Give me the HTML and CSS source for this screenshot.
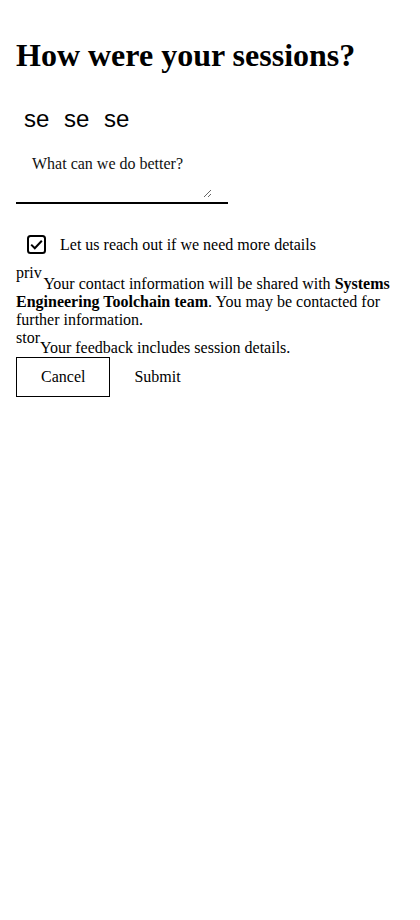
FILE: index.html
```html
<!DOCTYPE html>
<html>
<head>
<meta charset="utf-8">
<link rel="stylesheet" href="styles.css">
</head>
<body>
<div class="page">
  <h1 class="title">How were your sessions?</h1>
  <div class="rating">
    <span class="icon-btn">se</span>
    <span class="icon-btn">se</span>
    <span class="icon-btn">se</span>
  </div>
  <div class="field">
    <textarea class="feedback" placeholder="What can we do better?"></textarea>
  </div>
  <label class="check-row">
    <svg class="check" width="19" height="19" viewBox="0 0 19 19"><rect x="1" y="1" width="17" height="17" rx="2.5" fill="none" stroke="#000" stroke-width="2"/><path d="M4.2 9.6 L7.8 13.2 L14.8 5.8" fill="none" stroke="#000" stroke-width="2"/></svg>
    <span class="check-label">Let us reach out if we need more details</span>
  </label>
  <p class="note note-first"><span class="mi mi-high">priv</span> Your contact information will be shared with <b>Systems Engineering Toolchain team</b>. You may be contacted for further information.</p>
  <p class="note"><span class="mi mi-low">stor</span>Your feedback includes session details.</p>
  <div class="actions">
    <button class="btn btn-outline">Cancel</button>
    <button class="btn btn-text">Submit</button>
  </div>
</div>
</body>
</html>
```
FILE: styles.css
```css
html, body {
  margin: 0;
  padding: 0;
  background: #fff;
}
body {
  font-family: "Liberation Serif", "Times New Roman", serif;
  font-size: 16px;
  color: #000;
}
.page {
  padding: 16px;
}
.title {
  font-size: 32px;
  font-weight: bold;
  margin: 21px 0 0 0;
  line-height: 37px;
}
.rating {
  display: flex;
  gap: 16px;
  padding: 0 8px;
  margin-top: 31px;
}
.icon-btn {
  display: block;
  width: 24px;
  height: 28px;
  white-space: nowrap;
  font-family: "Liberation Sans", Arial, sans-serif;
  font-size: 24px;
  line-height: 28px;
}
.field {
  width: 212px;
  margin-top: 15px;
  padding-bottom: 4px;
  border-bottom: 2px solid #000;
}
.feedback {
  display: block;
  box-sizing: border-box;
  width: 196px;
  height: 50px;
  padding: 7px 16px 0 16px;
  border: none;
  font-family: "Liberation Serif", serif;
  font-size: 16px;
  outline: none;
  background: transparent;
}
.feedback::placeholder {
  color: #111;
}
.check-row {
  display: flex;
  align-items: center;
  gap: 14px;
  margin-top: 31px;
  padding-left: 11px;
}
.check {
  display: block;
  flex: none;
}
.note {
  margin: 0;
  line-height: 18px;
}
.note-first {
  margin-top: 10px;
}
.mi {
  display: inline-block;
  width: 24px;
  white-space: nowrap;
}
.mi-high {
  vertical-align: 11px;
}
.mi-low {
  vertical-align: 10px;
}
.actions {
  display: flex;
}
.btn {
  font-family: "Liberation Serif", serif;
  font-size: 16px;
  color: #000;
  background: transparent;
  padding: 10px 24px;
  height: 40px;
  cursor: pointer;
}
.btn-outline {
  border: 1px solid #000;
}
.btn-text {
  border: 1px solid transparent;
  padding-left: 23px;
}
```
